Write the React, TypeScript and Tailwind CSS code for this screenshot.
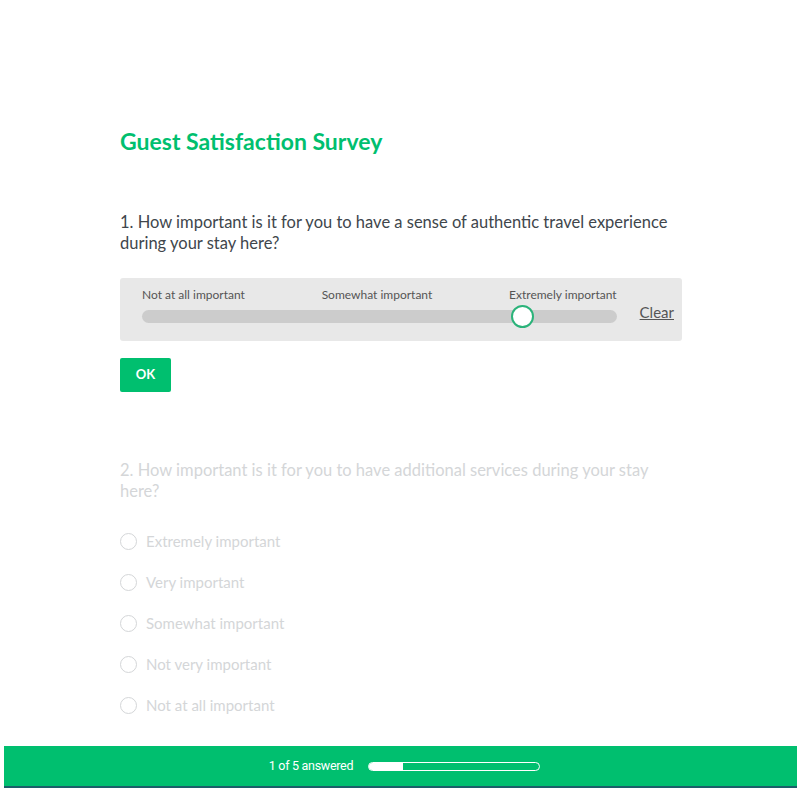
import React from "react";

const options = [
  "Extremely important",
  "Very important",
  "Somewhat important",
  "Not very important",
  "Not at all important",
];

export default function App() {
  return (
    <div className="relative h-[790px] w-[800px] bg-white font-['Lato',sans-serif]">
      <div className="pl-[120px] pr-[118px] pt-[126px]">
        {/* Title */}
        <h1 className="text-[23px] font-bold leading-[30px] text-[#00bf6f]">
          Guest Satisfaction Survey
        </h1>

        {/* Question 1 */}
        <p className="mt-[56px] text-[16.5px] leading-[21px] text-[#40464c]">
          1. How important is it for you to have a sense of authentic travel experience during your stay here?
        </p>

        <div className="mt-[24px] flex h-[63px] w-[562px] items-start rounded-[3px] bg-[#e8e8e8] pl-[22px] pr-[8px] pt-[9px]">
          <div className="w-[475px]">
            <div className="flex justify-between text-[12px] leading-[15px] text-[#555]">
              <span>Not at all important</span>
              <span>Somewhat important</span>
              <span>Extremely important</span>
            </div>
            <div className="relative mt-[8px] h-[13px] rounded-full bg-[#cccccc]">
              <div className="absolute left-[369px] top-[-5px] h-[23px] w-[23px] rounded-full border-2 border-[#2bb37a] bg-white" />
            </div>
          </div>
          <span className="ml-[23px] mt-[15px] text-[15px] leading-[20px] text-[#555] underline">Clear</span>
        </div>

        <button className="mt-[17px] h-[34px] w-[51px] rounded-[2px] bg-[#00bf6f] text-[13px] font-bold text-white">
          OK
        </button>

        {/* Question 2 (inactive) */}
        <p className="mt-[68px] pr-[20px] text-[16.5px] leading-[21px] text-[#d4d6d8]">
          2. How important is it for you to have additional services during your stay here?
        </p>
        <div className="mt-[30px] flex flex-col gap-[22px]">
          {options.map((o) => (
            <label key={o} className="flex h-[19px] items-center gap-[9px] text-[15px] text-[#d4d6d8]">
              <span className="h-[17px] w-[17px] rounded-full border border-[#d4d6d8]" />
              {o}
            </label>
          ))}
        </div>
      </div>

      {/* Footer progress */}
      <div className="absolute bottom-[2px] left-[4px] flex h-[42px] w-[793px] items-center justify-center gap-[15px] border-b-2 border-[#1a5f6a] bg-[#00bf6f] pl-[8px]">
        <span className="font-['Roboto',sans-serif] text-[12.5px] tracking-[-0.3px] text-white">1 of 5 answered</span>
        <div className="h-[9px] w-[172px] overflow-hidden rounded-full border border-white">
          <div className="h-full w-[20%] bg-white" />
        </div>
      </div>
    </div>
  );
}
